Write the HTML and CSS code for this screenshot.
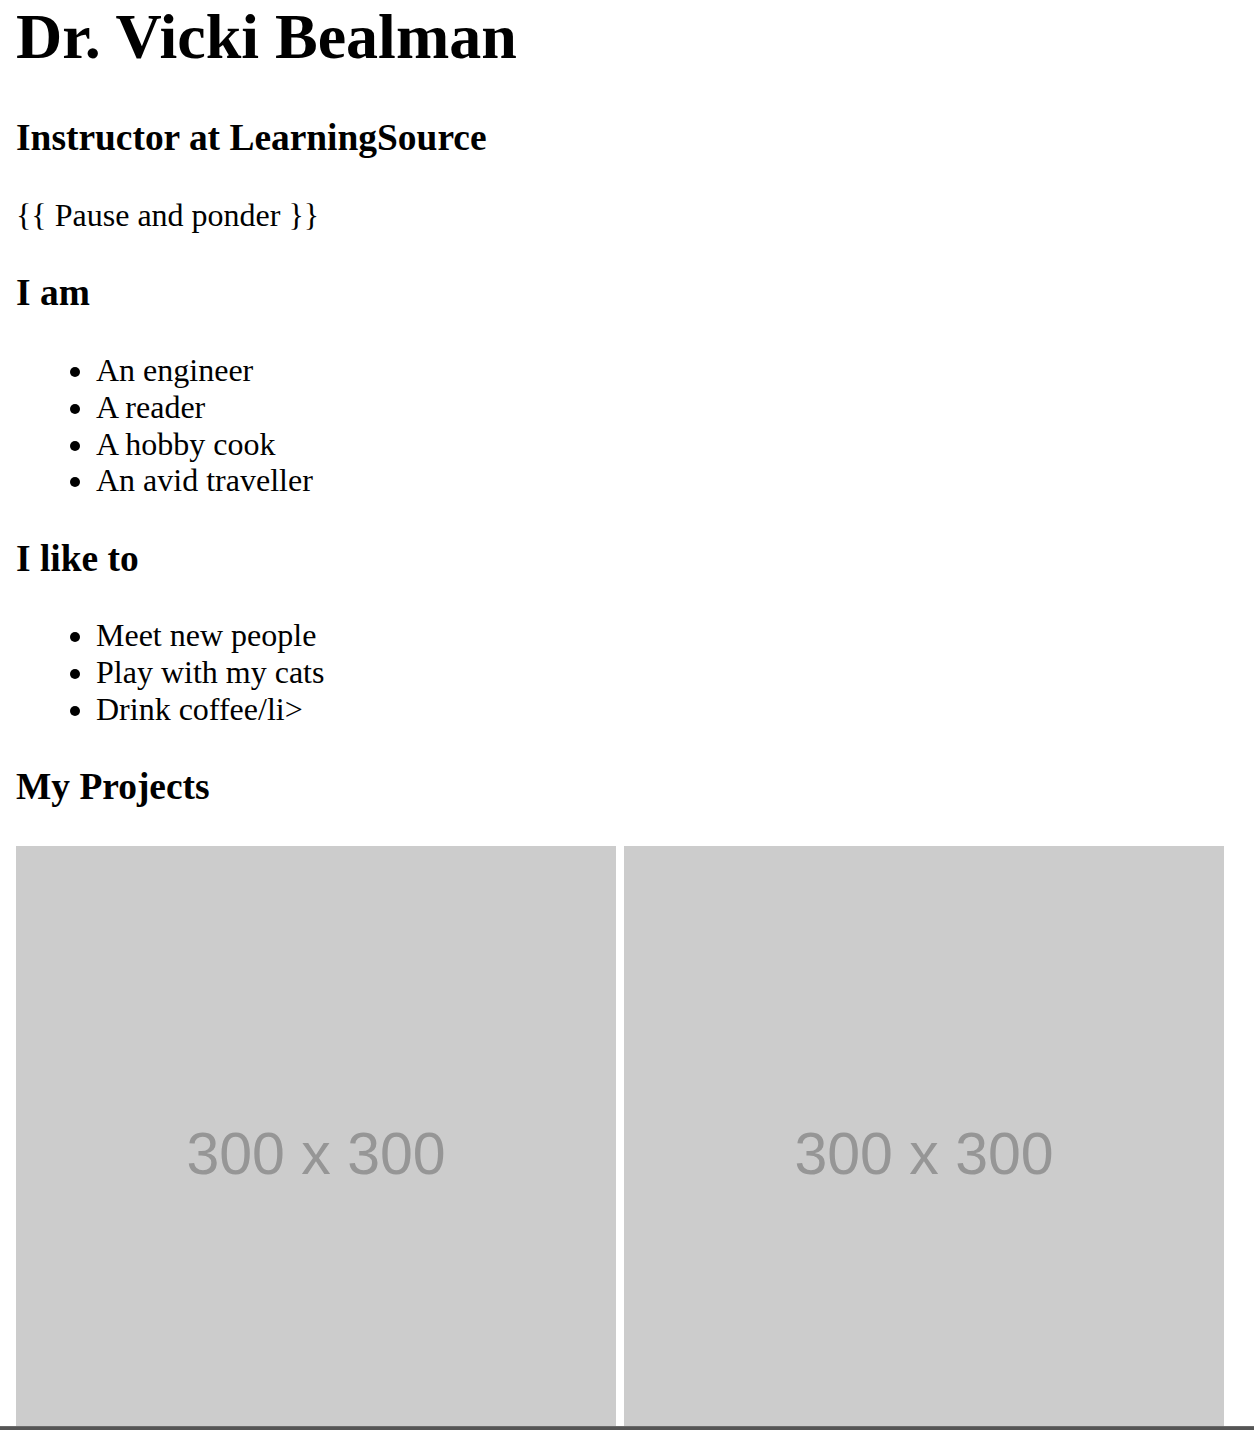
FILE: index.html
```html
<!DOCTYPE html>
<html>
<head>
<meta charset="utf-8">
<title>Dr. Vicki Bealman</title>
<link rel="stylesheet" href="styles.css">
</head>
<body>
<h1 class="name">Dr. Vicki Bealman</h1>
<h3 class="heading">Instructor at LearningSource</h3>
<p class="text">{{ Pause and ponder }}</p>
<h3 class="heading">I am</h3>
<ul class="list">
  <li>An engineer</li>
  <li>A reader</li>
  <li>A hobby cook</li>
  <li>An avid traveller</li>
</ul>
<h3 class="heading">I like to</h3>
<ul class="list">
  <li>Meet new people</li>
  <li>Play with my cats</li>
  <li>Drink coffee/li&gt;</li>
</ul>
<h3 class="heading">My Projects</h3>
<div class="projects">
  <div class="placeholder"><span class="ph-text">300 x 300</span></div>
  <div class="placeholder"><span class="ph-text">300 x 300</span></div>
</div>
<div class="window-edge"></div>
</body>
</html>
```

FILE: styles.css
```css
html, body {
  background: #ffffff;
}
body {
  margin: 0 16px 16px;
  font-family: "Liberation Serif", "Times New Roman", serif;
  font-size: 32px;
  line-height: 36.8px;
  color: #000;
}
.name {
  font-size: 64px;
  font-weight: bold;
  line-height: 73.6px;
  margin: 0 0 42.88px;
}
.heading {
  font-size: 37.44px;
  font-weight: bold;
  line-height: 43.2px;
  margin: 37.44px 0;
}
.text {
  margin: 32px 0;
}
.list {
  margin: 32px 0;
  padding-left: 80px;
}
.projects {
  display: flex;
  gap: 8px;
  margin: 37.44px 0 32px;
}
.placeholder {
  width: 600px;
  height: 600px;
  flex: 0 0 600px;
  background: #cccccc;
  display: flex;
  align-items: center;
  justify-content: center;
  box-sizing: border-box;
  padding-top: 16px;
}
.ph-text {
  font-family: "Liberation Sans", Arial, sans-serif;
  font-size: 59px;
  line-height: 68px;
  color: #969696;
  filter: blur(0.7px);
}
.window-edge {
  position: fixed;
  left: 0;
  right: 0;
  bottom: 0;
  height: 4px;
  background: #555555;
  border-top: 1px solid #6a6a6a;
  box-sizing: border-box;
}
```
